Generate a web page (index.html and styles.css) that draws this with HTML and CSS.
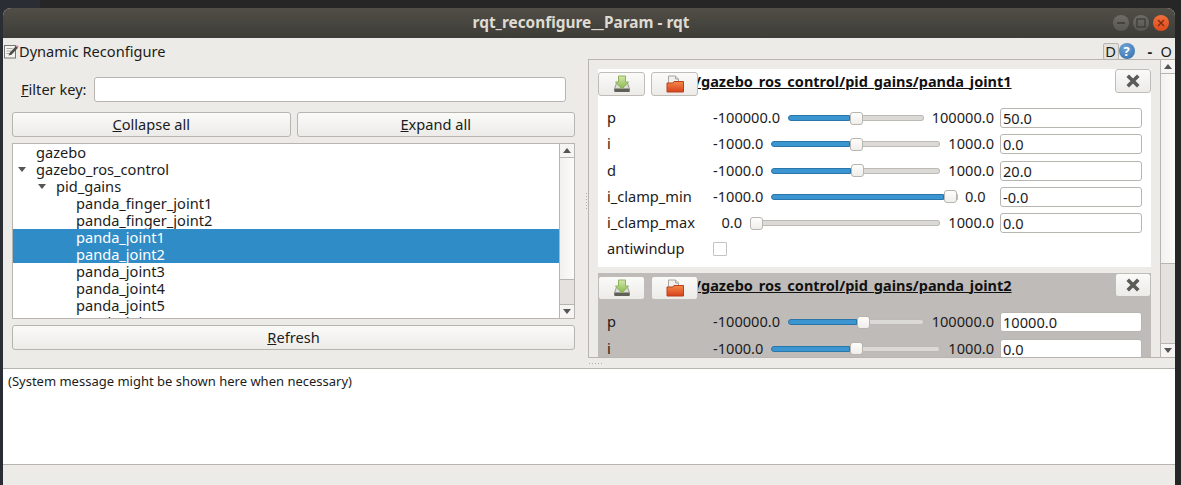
FILE: index.html
```html
<!DOCTYPE html>
<html>

<head>
    <title>rqt_reconfigure__Param - rqt</title>
    <meta name="viewport" content="width=device-width, initial-scale=1.0">
    <link rel="stylesheet" href="styles.css">
</head>

<body>
    <svg class="defs" width="0" height="0">
        <defs>
            <linearGradient id="folder-fill" x1="0" y1="0" x2="0" y2="1">
                <stop offset="0" stop-color="#f58a4a" />
                <stop offset="1" stop-color="#d8401a" />
            </linearGradient>
            <linearGradient id="arrow-fill" x1="0" y1="0" x2="0" y2="1">
                <stop offset="0" stop-color="#d3e8a8" />
                <stop offset="1" stop-color="#86b84c" />
            </linearGradient>
            <symbol id="icon-save" viewBox="0 0 18 18">
                <path d="M3.5 8h11l2 6v2.5h-15V14z" fill="#dcdcd6" stroke="#9a9a93" />
                <rect x="1.5" y="13.5" width="15" height="3.5" rx="1" fill="#5f6159" />
                <path d="M5.5 1h7v6h3l-6.500 7-6.500-7h3z" fill="url(#arrow-fill)" stroke="#8fb35c" />
            </symbol>
            <symbol id="icon-open" viewBox="0 0 18 18">
                <path d="M2.500 1h7l3 3v5h-10z" fill="#f2f0ec" stroke="#a8a6a0" />
                <path d="M9.500 1v3h3" fill="#dddbd6" stroke="#a8a6a0" />
                <path d="M1 8h6l1-1.500h9.500V17H1z" fill="url(#folder-fill)" stroke="#b5421e" />
            </symbol>
            <symbol id="icon-close" viewBox="0 0 14 14">
                <path d="M3 3l8 8M11 3l-8 8" stroke="#5b5b57" stroke-width="3.600" stroke-linecap="square" />
            </symbol>
        </defs>
    </svg>

    <div class="window">
        <div class="titlebar">
            <span class="title-text">rqt_reconfigure__Param - rqt</span>
            <div class="wm-buttons">
                <span class="wm-btn"><svg width="10" height="10" viewBox="0 0 10 10"><path d="M1 5h8" stroke="#3a3935" stroke-width="1.300" /></svg></span>
                <span class="wm-btn"><svg width="10" height="10" viewBox="0 0 10 10"><rect x="1" y="1" width="8" height="8" fill="none" stroke="#3a3935" stroke-width="1.200" /></svg></span>
                <span class="wm-btn wm-close"><svg width="10" height="10" viewBox="0 0 10 10"><path d="M2 2l6 6M8 2l-6 6" stroke="#7a2a10" stroke-width="1.300" /></svg></span>
            </div>
        </div>

        <div class="toolbar">
            <svg class="plugin-icon" width="15" height="15" viewBox="0 0 15 15">
                <rect x="0.500" y="1.500" width="11" height="12.500" fill="#f4f4f1" stroke="#77766f" />
                <path d="M2.500 4.500h6M2.500 7h5M2.500 9.500h3" stroke="#a9a8a2" />
                <path d="M4.500 11.500l1-2.500 6.500-7 2 1.800-6.500 7z" fill="#4d4d49" />
                <path d="M12 2l1-1 2 1.800-1 1z" fill="#d98fb8" />
            </svg>
            <span class="toolbar-label">Dynamic Reconfigure</span>
            <span class="toolbar-d">D</span>
            <span class="toolbar-help">?</span>
            <span class="toolbar-dash">-</span>
            <span class="toolbar-o">O</span>
        </div>

        <div class="main">
            <div class="left-pane">
                <div class="filter-row">
                    <label class="filter-label"><u>F</u>ilter key:</label>
                    <input class="filter-input" type="text">
                </div>
                <div class="button-row">
                    <button class="btn"><u>C</u>ollapse all</button>
                    <button class="btn"><u>E</u>xpand all</button>
                </div>
                <div class="tree">
                    <div class="tree-rows">
                        <div class="tree-row depth-0">gazebo</div>
                        <div class="tree-row depth-0"><span class="arrow"></span>gazebo_ros_control</div>
                        <div class="tree-row depth-1"><span class="arrow"></span>pid_gains</div>
                        <div class="tree-row depth-2">panda_finger_joint1</div>
                        <div class="tree-row depth-2">panda_finger_joint2</div>
                        <div class="tree-row depth-2 selected">panda_joint1</div>
                        <div class="tree-row depth-2 selected">panda_joint2</div>
                        <div class="tree-row depth-2">panda_joint3</div>
                        <div class="tree-row depth-2">panda_joint4</div>
                        <div class="tree-row depth-2">panda_joint5</div>
                        <div class="tree-row depth-2">panda_joint6</div>
                    </div>
                    <div class="scrollbar">
                        <div class="sb-btn"><span class="sb-up"></span></div>
                        <div class="sb-thumb"></div>
                        <div class="sb-trough tree-trough"></div>
                        <div class="sb-btn sb-btn-last"><span class="sb-down"></span></div>
                    </div>
                </div>
                <button class="btn refresh-btn"><u>R</u>efresh</button>
            </div>

            <div class="v-splitter"><span class="v-dots"></span></div>

            <div class="right-pane">
                <div class="groups">
                    <div class="group">
                        <div class="group-head">
                            <button class="icon-btn"><svg width="18" height="18"><use href="#icon-save" /></svg></button>
                            <button class="icon-btn"><svg width="18" height="18"><use href="#icon-open" /></svg></button>
                            <span class="group-title">/gazebo_ros_control/pid_gains/panda_joint1</span>
                            <button class="close-btn"><svg width="14" height="14"><use href="#icon-close" /></svg></button>
                        </div>
                        <div class="param">
                            <span class="param-name">p</span>
                            <span class="num-min">-100000.0</span>
                            <div class="slider"><div class="fill" style="width: 45.6%"></div><div class="handle"></div><div class="rest"></div></div>
                            <span class="num-max">100000.0</span>
                            <input class="param-input" type="text" value="50.0">
                        </div>
                        <div class="param">
                            <span class="param-name">i</span>
                            <span class="num-min">-1000.0</span>
                            <div class="slider"><div class="fill" style="width: 46.5%"></div><div class="handle"></div><div class="rest"></div></div>
                            <span class="num-max">1000.0</span>
                            <input class="param-input" type="text" value="0.0">
                        </div>
                        <div class="param">
                            <span class="param-name">d</span>
                            <span class="num-min">-1000.0</span>
                            <div class="slider"><div class="fill" style="width: 47.1%"></div><div class="handle"></div><div class="rest"></div></div>
                            <span class="num-max">1000.0</span>
                            <input class="param-input" type="text" value="20.0">
                        </div>
                        <div class="param">
                            <span class="param-name">i_clamp_min</span>
                            <span class="num-min">-1000.0</span>
                            <div class="slider"><div class="fill" style="width: 93%"></div><div class="handle"></div><div class="rest"></div></div>
                            <span class="num-max num-zero">0.0</span>
                            <input class="param-input" type="text" value="-0.0">
                        </div>
                        <div class="param">
                            <span class="param-name">i_clamp_max</span>
                            <span class="num-min num-zero">0.0</span>
                            <div class="slider"><div class="handle"></div><div class="rest"></div></div>
                            <span class="num-max">1000.0</span>
                            <input class="param-input" type="text" value="0.0">
                        </div>
                        <div class="param">
                            <span class="param-name">antiwindup</span>
                            <span class="checkbox"></span>
                        </div>
                    </div>

                    <div class="group group-active">
                        <div class="group-head">
                            <button class="icon-btn"><svg width="18" height="18"><use href="#icon-save" /></svg></button>
                            <button class="icon-btn"><svg width="18" height="18"><use href="#icon-open" /></svg></button>
                            <span class="group-title">/gazebo_ros_control/pid_gains/panda_joint2</span>
                            <button class="close-btn"><svg width="14" height="14"><use href="#icon-close" /></svg></button>
                        </div>
                        <div class="param">
                            <span class="param-name">p</span>
                            <span class="num-min">-100000.0</span>
                            <div class="slider"><div class="fill" style="width: 50.7%"></div><div class="handle"></div><div class="rest"></div></div>
                            <span class="num-max">100000.0</span>
                            <input class="param-input" type="text" value="10000.0">
                        </div>
                        <div class="param">
                            <span class="param-name">i</span>
                            <span class="num-min">-1000.0</span>
                            <div class="slider"><div class="fill" style="width: 46.5%"></div><div class="handle"></div><div class="rest"></div></div>
                            <span class="num-max">1000.0</span>
                            <input class="param-input" type="text" value="0.0">
                        </div>
                    </div>
                </div>
                <div class="scrollbar">
                    <div class="sb-btn"><span class="sb-up"></span></div>
                    <div class="sb-thumb"></div>
                    <div class="sb-trough right-trough"></div>
                    <div class="sb-btn sb-btn-last"><span class="sb-down"></span></div>
                </div>
            </div>
        </div>

        <div class="h-splitter"><span class="h-dots"></span></div>

        <div class="message-box">(System message might be shown here when necessary)</div>
    </div>
</body>

</html>
```

FILE: styles.css
```css
html,
body {
    margin: 0;
    height: 100%;
    overflow: hidden;
}

body {
    background: linear-gradient(90deg, #2a2d33 40px, #262626 40px);
    font-family: "Noto Sans", sans-serif;
    font-size: 14.6px;
    color: #1c1c1c;
}

.defs {
    position: absolute;
}

.window {
    margin: 8px 6px 0 3px;
    height: 477px;
    display: flex;
    flex-direction: column;
    background-color: #edebe7;
    border-radius: 8px 8px 0 0;
    overflow: hidden;
}

/* title bar */
.titlebar {
    height: 30px;
    flex: none;
    box-sizing: border-box;
    display: flex;
    align-items: center;
    justify-content: center;
    padding: 0 16px 2px 0;
    background: linear-gradient(#514e47, #3d3c38);
    position: relative;
}

.title-text {
    font-weight: bold;
    font-size: 15.4px;
    color: #dfdbd2;
}

.wm-buttons {
    position: absolute;
    right: 6px;
    top: 7px;
    display: flex;
    gap: 4px;
}

.wm-btn {
    width: 16px;
    height: 16px;
    border-radius: 50%;
    background: linear-gradient(#6d6c67, #575651);
    display: flex;
    align-items: center;
    justify-content: center;
}

.wm-close {
    background: linear-gradient(#f0703c, #dd4a1c);
}

/* toolbar */
.toolbar {
    height: 21px;
    flex: none;
    box-sizing: border-box;
    display: flex;
    align-items: center;
    padding: 5px 3px 0 1px;
}

.toolbar-label {
    flex: 1;
}

.toolbar-d {
    width: 14px;
    height: 15px;
    line-height: 15px;
    text-align: center;
    border: 1px solid #b8b5b1;
    border-radius: 2px;
    background-color: #e4e2de;
}

.toolbar-help {
    width: 16px;
    height: 16px;
    line-height: 16px;
    border-radius: 50%;
    text-align: center;
    font-weight: bold;
    font-size: 13px;
    color: #fff;
    background: radial-gradient(circle at 40% 30%, #6fa5d6, #2f69a8);
}

.toolbar-dash {
    margin-left: 13px;
    width: 6px;
    font-weight: bold;
}

.toolbar-o {
    margin-left: 7px;
}

/* main area */
.main {
    height: 299px;
    flex: none;
    display: flex;
}

.left-pane {
    width: 563px;
    flex: none;
    margin-left: 9px;
    padding-top: 18px;
    display: flex;
    flex-direction: column;
}

.filter-row {
    height: 25px;
    display: flex;
    align-items: center;
    padding: 0 9px;
    gap: 7px;
}

.filter-label {
    width: 66px;
    padding-bottom: 2px;
    white-space: nowrap;
}

.filter-input {
    flex: 1;
    height: 25px;
    box-sizing: border-box;
    border: 1px solid #b8b5b1;
    border-radius: 3px;
    background-color: #fff;
}

.button-row {
    display: flex;
    gap: 6px;
    margin-top: 10px;
}

.btn {
    flex: 1;
    height: 25px;
    padding: 0 0 2px;
    border: 1px solid #b8b5b1;
    border-radius: 3px;
    background: linear-gradient(#fafaf9, #ecebe8);
    font-family: inherit;
    font-size: 14.6px;
    color: #1c1c1c;
}

.refresh-btn {
    flex: none;
    margin-top: 6px;
}

.tree {
    height: 176px;
    box-sizing: border-box;
    margin-top: 6px;
    border: 1px solid #b8b5b1;
    background-color: #fff;
    display: flex;
    overflow: hidden;
}

.tree-rows {
    flex: 1;
    min-width: 0;
    overflow: hidden;
}

.tree-row {
    height: 17px;
    line-height: 17px;
    position: relative;
    white-space: nowrap;
}

.depth-0 {
    padding-left: 23px;
}

.depth-1 {
    padding-left: 43px;
}

.depth-2 {
    padding-left: 63px;
}

.selected {
    background-color: #308cc6;
    color: #fff;
}

.arrow {
    position: absolute;
    top: 6px;
    margin-left: -18px;
    border-left: 4px solid transparent;
    border-right: 4px solid transparent;
    border-top: 5px solid #555;
}

/* scrollbars */
.scrollbar {
    width: 14px;
    flex: none;
    display: flex;
    flex-direction: column;
    border-left: 1px solid #b8b5b1;
}

.sb-btn {
    height: 13px;
    flex: none;
    display: flex;
    align-items: center;
    justify-content: center;
    background-color: #f6f5f3;
    border-bottom: 1px solid #b8b5b1;
}

.sb-btn-last {
    border-bottom: none;
    border-top: 1px solid #b8b5b1;
}

.sb-up {
    border-left: 4px solid transparent;
    border-right: 4px solid transparent;
    border-bottom: 5px solid #555;
}

.sb-down {
    border-left: 4px solid transparent;
    border-right: 4px solid transparent;
    border-top: 5px solid #555;
}

.sb-thumb {
    flex: 1;
    background: linear-gradient(90deg, #f2f1ef, #fbfbfa);
}

.sb-trough {
    flex: none;
    background-color: #e3e2df;
    border-top: 1px solid #b8b5b1;
}

.tree-trough {
    height: 24px;
}

.right-trough {
    height: 79px;
}

/* splitters */
.v-splitter {
    width: 13px;
    flex: none;
    display: flex;
    align-items: center;
    justify-content: center;
}

.v-dots {
    width: 1px;
    height: 16px;
    margin-left: 10px;
    margin-bottom: 16px;
    background: repeating-linear-gradient(#b3b0ab 0 1px, transparent 1px 3px);
}

.h-splitter {
    height: 10px;
    flex: none;
    display: flex;
    justify-content: center;
    padding: 5px 0 0 586px;
    box-sizing: border-box;
    width: 600px;
}

.h-dots {
    width: 16px;
    height: 1px;
    background: repeating-linear-gradient(90deg, #b3b0ab 0 1px, transparent 1px 3px);
}

/* parameter editors */
.right-pane {
    flex: 1;
    min-width: 0;
    display: flex;
    border-top: 1px solid #b8b5b1;
    border-left: 1px solid #b8b5b1;
    border-bottom: 1px solid #b8b5b1;
    height: 299px;
    box-sizing: border-box;
}

.groups {
    flex: 1;
    min-width: 0;
    padding: 9px 9px 0;
    overflow: hidden;
}

.group {
    background-color: #fff;
    padding: 0 9px 8px;
    margin-bottom: 6px;
}

.group-active {
    background-color: #bfbbb8;
}

.group-head {
    height: 39px;
    margin: 0 -9px;
    display: flex;
    align-items: flex-start;
    gap: 6px;
}

.icon-btn {
    width: 47px;
    height: 24px;
    margin-top: 3px;
    padding: 0;
    flex: none;
    position: relative;
    z-index: 1;
    display: flex;
    align-items: center;
    justify-content: center;
    border: 1px solid #c0bdb9;
    border-radius: 3px;
    background: linear-gradient(#fafaf9, #ecebe8);
}

.group-title {
    flex: 1;
    margin-left: -9px;
    margin-top: 2px;
    font-weight: bold;
    font-size: 14.5px;
    line-height: 20px;
    text-decoration: underline;
    white-space: nowrap;
    color: #111;
}

.close-btn {
    width: 36px;
    height: 24px;
    padding: 0;
    flex: none;
    display: flex;
    align-items: center;
    justify-content: center;
    border: 1px solid #c0bdb9;
    border-radius: 3px;
    background: linear-gradient(#fafaf9, #ecebe8);
}

.param {
    height: 20px;
    display: flex;
    align-items: center;
    margin-bottom: 6.250px;
    white-space: nowrap;
}

.param:last-child {
    margin-bottom: 0;
}

.param-name {
    width: 106px;
    flex: none;
    padding-bottom: 2px;
}

.num-min {
    min-width: 50px;
    flex: none;
    text-align: right;
    margin-right: 8px;
    padding-bottom: 2px;
}

.num-max {
    min-width: 45px;
    flex: none;
    text-align: right;
    margin-left: 8px;
    margin-right: 6px;
    padding-bottom: 2px;
}

.num-zero {
    min-width: 29px;
}

.num-max.num-zero {
    text-align: left;
}

.slider {
    flex: 1;
    min-width: 0;
    display: flex;
    align-items: center;
}

.fill {
    height: 6px;
    flex: none;
    box-sizing: border-box;
    border: 1px solid #2a76a8;
    border-radius: 3px 0 0 3px;
    background-color: #3a95d0;
}

.handle {
    width: 13px;
    height: 13px;
    flex: none;
    box-sizing: border-box;
    border: 1px solid #b8b5b1;
    border-radius: 3px;
    background: linear-gradient(#fdfdfc, #efeeeb);
}

.rest {
    flex: 1;
    height: 6px;
    box-sizing: border-box;
    border: 1px solid #bdbab6;
    border-left: none;
    border-radius: 0 3px 3px 0;
    background-color: #dcdad6;
}

.param-input {
    width: 142px;
    height: 20px;
    flex: none;
    box-sizing: border-box;
    padding: 0 2px;
    border: 1px solid #b8b5b1;
    border-radius: 3px;
    background-color: #fff;
    font-family: inherit;
    font-size: 14.6px;
    color: #1c1c1c;
}

.checkbox {
    width: 14px;
    height: 14px;
    box-sizing: border-box;
    border: 1px solid #c6c4c0;
    border-radius: 1px;
    background-color: #fff;
}

/* message area */
.message-box {
    height: 97px;
    flex: none;
    box-sizing: border-box;
    padding: 3px 5px;
    border-top: 1px solid #b8b5b1;
    border-bottom: 1px solid #b8b5b1;
    background-color: #fff;
    font-size: 13px;
}
```
